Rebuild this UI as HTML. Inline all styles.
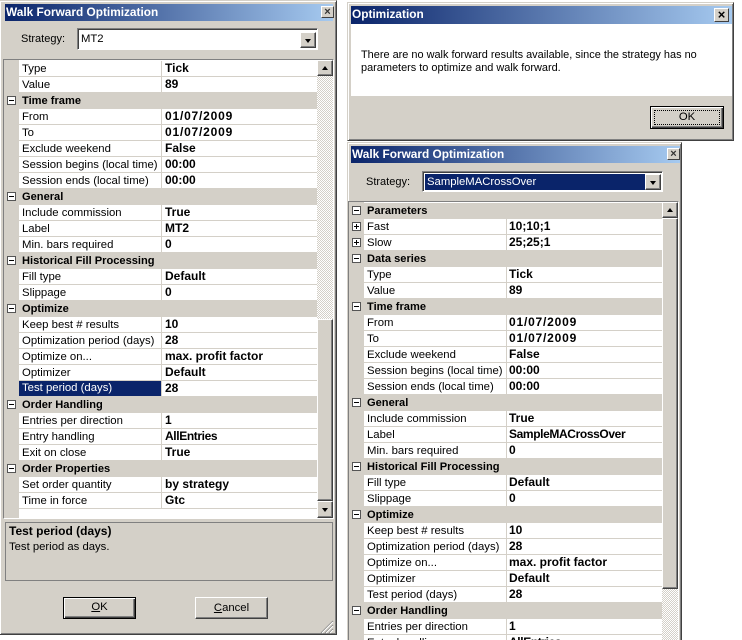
<!DOCTYPE html>
<html><head><meta charset="utf-8"><style>
html,body{margin:0;padding:0;width:742px;height:640px;overflow:hidden;background:#fff}
body{position:relative;font:12px/16px "Liberation Sans",sans-serif;color:#000}
div,span,b,i,s{position:absolute;box-sizing:border-box}
.win{background:#d4d0c8;border:1px solid;border-color:#d4d0c8 #404040 #404040 #d4d0c8;box-shadow:inset 1px 1px 0 #fff,inset -1px -1px 0 #808080,inset 2px 2px 0 #d4d0c8,inset -2px -2px 0 #d4d0c8;overflow:hidden}
.tb{background:linear-gradient(90deg,#0a246a,#a6caf0);color:#fff;font-weight:bold;font-size:11.85px;white-space:nowrap;padding-left:1px}
.x{background:#d4d0c8;border:1px solid;border-color:#fff #404040 #404040 #fff;font:bold 11px/11px "Liberation Sans",sans-serif;color:#333;text-align:center}
.grid{background:#fff;border:1px solid;border-color:#808080 #fff #fff #808080;overflow:hidden}
.rows{left:0;top:1px;width:100%}
.r{position:relative;height:16px;margin-left:15px;border-bottom:1px solid #d4d0c8;background:#fff}
.r i{font-style:normal;left:3px;top:0;white-space:nowrap;font-size:11.35px}
.r b{left:146px;top:-1px;height:16px;white-space:nowrap;font-size:12px}
.rt .r b{left:145px}
.r u{position:absolute;left:142px;top:0;width:1px;height:16px;background:#d4d0c8}
.r.h{background:#d4d0c8;border-bottom:0}
.r.h b{left:3px;top:0;font-size:11.1px}
.rt .r.h b{left:3px}
.r b.d{letter-spacing:.8px}
.r b.n{letter-spacing:-.38px}
.r.sel i{background:#0a246a;color:#fff;left:0;width:142px;height:15px;padding-left:3px;top:0;line-height:15px}
.m{width:9px;height:9px;border:1px solid #555;background:#fff;margin-left:-12px;left:0;top:3px}
.m:before{content:"";position:absolute;left:1px;top:3px;width:5px;height:1px;background:#000}
.p:after{content:"";position:absolute;left:3px;top:1px;width:1px;height:5px;background:#000}
.gut{left:0;top:0;width:15px;height:100%;background:#d4d0c8}
.btn3d{background:#d4d0c8;border:1px solid;border-color:#fff #404040 #404040 #fff;box-shadow:inset -1px -1px 0 #808080}
.ck{background-color:#fff;background-image:conic-gradient(#d4d0c8 25%,#fff 0 50%,#d4d0c8 0 75%,#fff 0);background-size:2px 2px}
.up:after,.dn:after{content:"";position:absolute;left:4px;width:0;height:0;border-left:3.5px solid transparent;border-right:3.5px solid transparent}
.up:after{top:5px;border-bottom:4px solid #000}
.dn:after{top:6px;border-top:4px solid #000}
.btn{text-align:center;font-size:11.3px;background:#d4d0c8;border:1px solid;border-color:#fff #404040 #404040 #fff;box-shadow:inset -1px -1px 0 #808080}
.def{border:1px solid #000;box-shadow:inset 1px 1px 0 #fff,inset -1px -1px 0 #404040,inset -2px -2px 0 #808080}
.combo{background:#fff;border:1px solid;border-color:#808080 #fff #fff #808080;box-shadow:inset 1px 1px 0 #404040;font-size:11.3px}
</style></head><body>

<div class="win" style="left:-1px;top:0;width:338px;height:635px">
 <div class="tb" style="left:5px;top:3px;width:328px;height:17px;line-height:17px">Walk Forward Optimization</div>
 <div class="x" style="left:321px;top:5px;width:13px;height:12px">×</div>
 <div style="left:21px;top:30px;font-size:11px">Strategy:</div>
 <div class="combo" style="left:77px;top:27px;width:241px;height:22px"><span style="left:3px;top:2px">MT2</span>
  <div class="btn3d dn" style="left:222px;top:3px;width:16px;height:16px"></div></div>
 <div class="grid" style="left:3px;top:58px;width:331px;height:460px">
  <div class="gut"></div>
  <div class="rows">
   <div class="r"><i>Type</i><u></u><b>Tick</b></div>
   <div class="r"><i>Value</i><u></u><b>89</b></div>
   <div class="r h"><s class="m"></s><b>Time frame</b></div>
   <div class="r"><i>From</i><u></u><b class="d">01/07/2009</b></div>
   <div class="r"><i>To</i><u></u><b class="d">01/07/2009</b></div>
   <div class="r"><i>Exclude weekend</i><u></u><b>False</b></div>
   <div class="r"><i>Session begins (local time)</i><u></u><b>00:00</b></div>
   <div class="r"><i>Session ends (local time)</i><u></u><b>00:00</b></div>
   <div class="r h"><s class="m"></s><b>General</b></div>
   <div class="r"><i>Include commission</i><u></u><b>True</b></div>
   <div class="r"><i>Label</i><u></u><b>MT2</b></div>
   <div class="r"><i>Min. bars required</i><u></u><b>0</b></div>
   <div class="r h"><s class="m"></s><b>Historical Fill Processing</b></div>
   <div class="r"><i>Fill type</i><u></u><b>Default</b></div>
   <div class="r"><i>Slippage</i><u></u><b>0</b></div>
   <div class="r h"><s class="m"></s><b>Optimize</b></div>
   <div class="r"><i>Keep best # results</i><u></u><b>10</b></div>
   <div class="r"><i>Optimization period (days)</i><u></u><b>28</b></div>
   <div class="r"><i>Optimize on...</i><u></u><b>max. profit factor</b></div>
   <div class="r"><i>Optimizer</i><u></u><b>Default</b></div>
   <div class="r sel"><i>Test period (days)</i><u></u><b>28</b></div>
   <div class="r h"><s class="m"></s><b>Order Handling</b></div>
   <div class="r"><i>Entries per direction</i><u></u><b>1</b></div>
   <div class="r"><i>Entry handling</i><u></u><b class="n">AllEntries</b></div>
   <div class="r"><i>Exit on close</i><u></u><b>True</b></div>
   <div class="r h"><s class="m"></s><b>Order Properties</b></div>
   <div class="r"><i>Set order quantity</i><u></u><b>by strategy</b></div>
   <div class="r"><i>Time in force</i><u></u><b>Gtc</b></div>
  </div>
  <div class="ck" style="left:313px;top:0;width:16px;height:458px"></div>
  <div class="btn3d up" style="left:313px;top:0;width:16px;height:16px"></div>
  <div class="btn3d" style="left:313px;top:259px;width:16px;height:182px"></div>
  <div class="btn3d dn" style="left:313px;top:441px;width:16px;height:17px"></div>
 </div>
 <div style="left:5px;top:521px;width:328px;height:59px;border:1px solid #808080"></div>
 <div style="left:9px;top:522px;font-weight:bold">Test period (days)</div>
 <div style="left:9px;top:538px;font-size:11.3px">Test period as days.</div>
 <div class="btn def" style="left:63px;top:596px;width:73px;height:22px;line-height:19px"><u>O</u>K</div>
 <div class="btn" style="left:195px;top:596px;width:73px;height:22px;line-height:20px"><u>C</u>ancel</div>
 <svg style="position:absolute;left:320px;top:619px" width="14" height="14" stroke-width="1"><path d="M13 1L1 13M13 5L5 13M13 9L9 13" stroke="#808080" fill="none"/><path d="M13 2L2 13M13 6L6 13M13 10L10 13" stroke="#fff" fill="none"/></svg>
</div>

<div class="win" style="left:347px;top:2px;width:387px;height:139px">
 <div class="tb" style="left:3px;top:3px;width:381px;height:18px;line-height:17px">Optimization</div>
 <div class="x" style="left:366px;top:5px;width:15px;height:14px;font-size:13px;line-height:12px;color:#000">×</div>
 <div style="left:3px;top:21px;width:381px;height:72px;background:#fff"></div>
 <div style="left:13px;top:46px;white-space:nowrap;line-height:13px;font-size:10.93px">There are no walk forward results available, since the strategy has no<br>parameters to optimize and walk forward.</div>
 <div class="btn def" style="left:302px;top:103px;width:74px;height:23px;line-height:20px">OK<span style="left:3px;top:3px;right:3px;bottom:3px;border:1px dotted #000"></span></div>
</div>

<div class="win" style="left:347px;top:142px;width:335px;height:520px">
 <div class="tb" style="left:3px;top:3px;width:329px;height:17px;line-height:17px">Walk Forward Optimization</div>
 <div class="x" style="left:319px;top:5px;width:13px;height:12px">×</div>
 <div style="left:18px;top:31px;font-size:11px">Strategy:</div>
 <div class="combo" style="left:74px;top:28px;width:241px;height:21px">
  <div style="left:2px;top:2px;width:221px;height:16px;background:#0a246a;color:#fff;line-height:16px;padding-left:2px">SampleMACrossOver</div>
  <div class="btn3d dn" style="left:222px;top:2px;width:16px;height:16px"></div></div>
 <div class="grid rt" style="left:0;top:58px;width:331px;height:470px">
  <div class="gut"></div>
  <div class="rows">
   <div class="r h"><s class="m"></s><b>Parameters</b></div>
   <div class="r"><s class="m p"></s><i>Fast</i><u></u><b>10;10;1</b></div>
   <div class="r"><s class="m p"></s><i>Slow</i><u></u><b>25;25;1</b></div>
   <div class="r h"><s class="m"></s><b>Data series</b></div>
   <div class="r"><i>Type</i><u></u><b>Tick</b></div>
   <div class="r"><i>Value</i><u></u><b>89</b></div>
   <div class="r h"><s class="m"></s><b>Time frame</b></div>
   <div class="r"><i>From</i><u></u><b class="d">01/07/2009</b></div>
   <div class="r"><i>To</i><u></u><b class="d">01/07/2009</b></div>
   <div class="r"><i>Exclude weekend</i><u></u><b>False</b></div>
   <div class="r"><i>Session begins (local time)</i><u></u><b>00:00</b></div>
   <div class="r"><i>Session ends (local time)</i><u></u><b>00:00</b></div>
   <div class="r h"><s class="m"></s><b>General</b></div>
   <div class="r"><i>Include commission</i><u></u><b>True</b></div>
   <div class="r"><i>Label</i><u></u><b class="n">SampleMACrossOver</b></div>
   <div class="r"><i>Min. bars required</i><u></u><b>0</b></div>
   <div class="r h"><s class="m"></s><b>Historical Fill Processing</b></div>
   <div class="r"><i>Fill type</i><u></u><b>Default</b></div>
   <div class="r"><i>Slippage</i><u></u><b>0</b></div>
   <div class="r h"><s class="m"></s><b>Optimize</b></div>
   <div class="r"><i>Keep best # results</i><u></u><b>10</b></div>
   <div class="r"><i>Optimization period (days)</i><u></u><b>28</b></div>
   <div class="r"><i>Optimize on...</i><u></u><b>max. profit factor</b></div>
   <div class="r"><i>Optimizer</i><u></u><b>Default</b></div>
   <div class="r"><i>Test period (days)</i><u></u><b>28</b></div>
   <div class="r h"><s class="m"></s><b>Order Handling</b></div>
   <div class="r"><i>Entries per direction</i><u></u><b>1</b></div>
   <div class="r"><i>Entry handling</i><u></u><b class="n">AllEntries</b></div>
  </div>
  <div class="ck" style="left:313px;top:0;width:16px;height:470px"></div>
  <div class="btn3d up" style="left:313px;top:0;width:16px;height:16px"></div>
  <div class="btn3d" style="left:313px;top:16px;width:16px;height:371px"></div>
 </div>
</div>
</body></html>
